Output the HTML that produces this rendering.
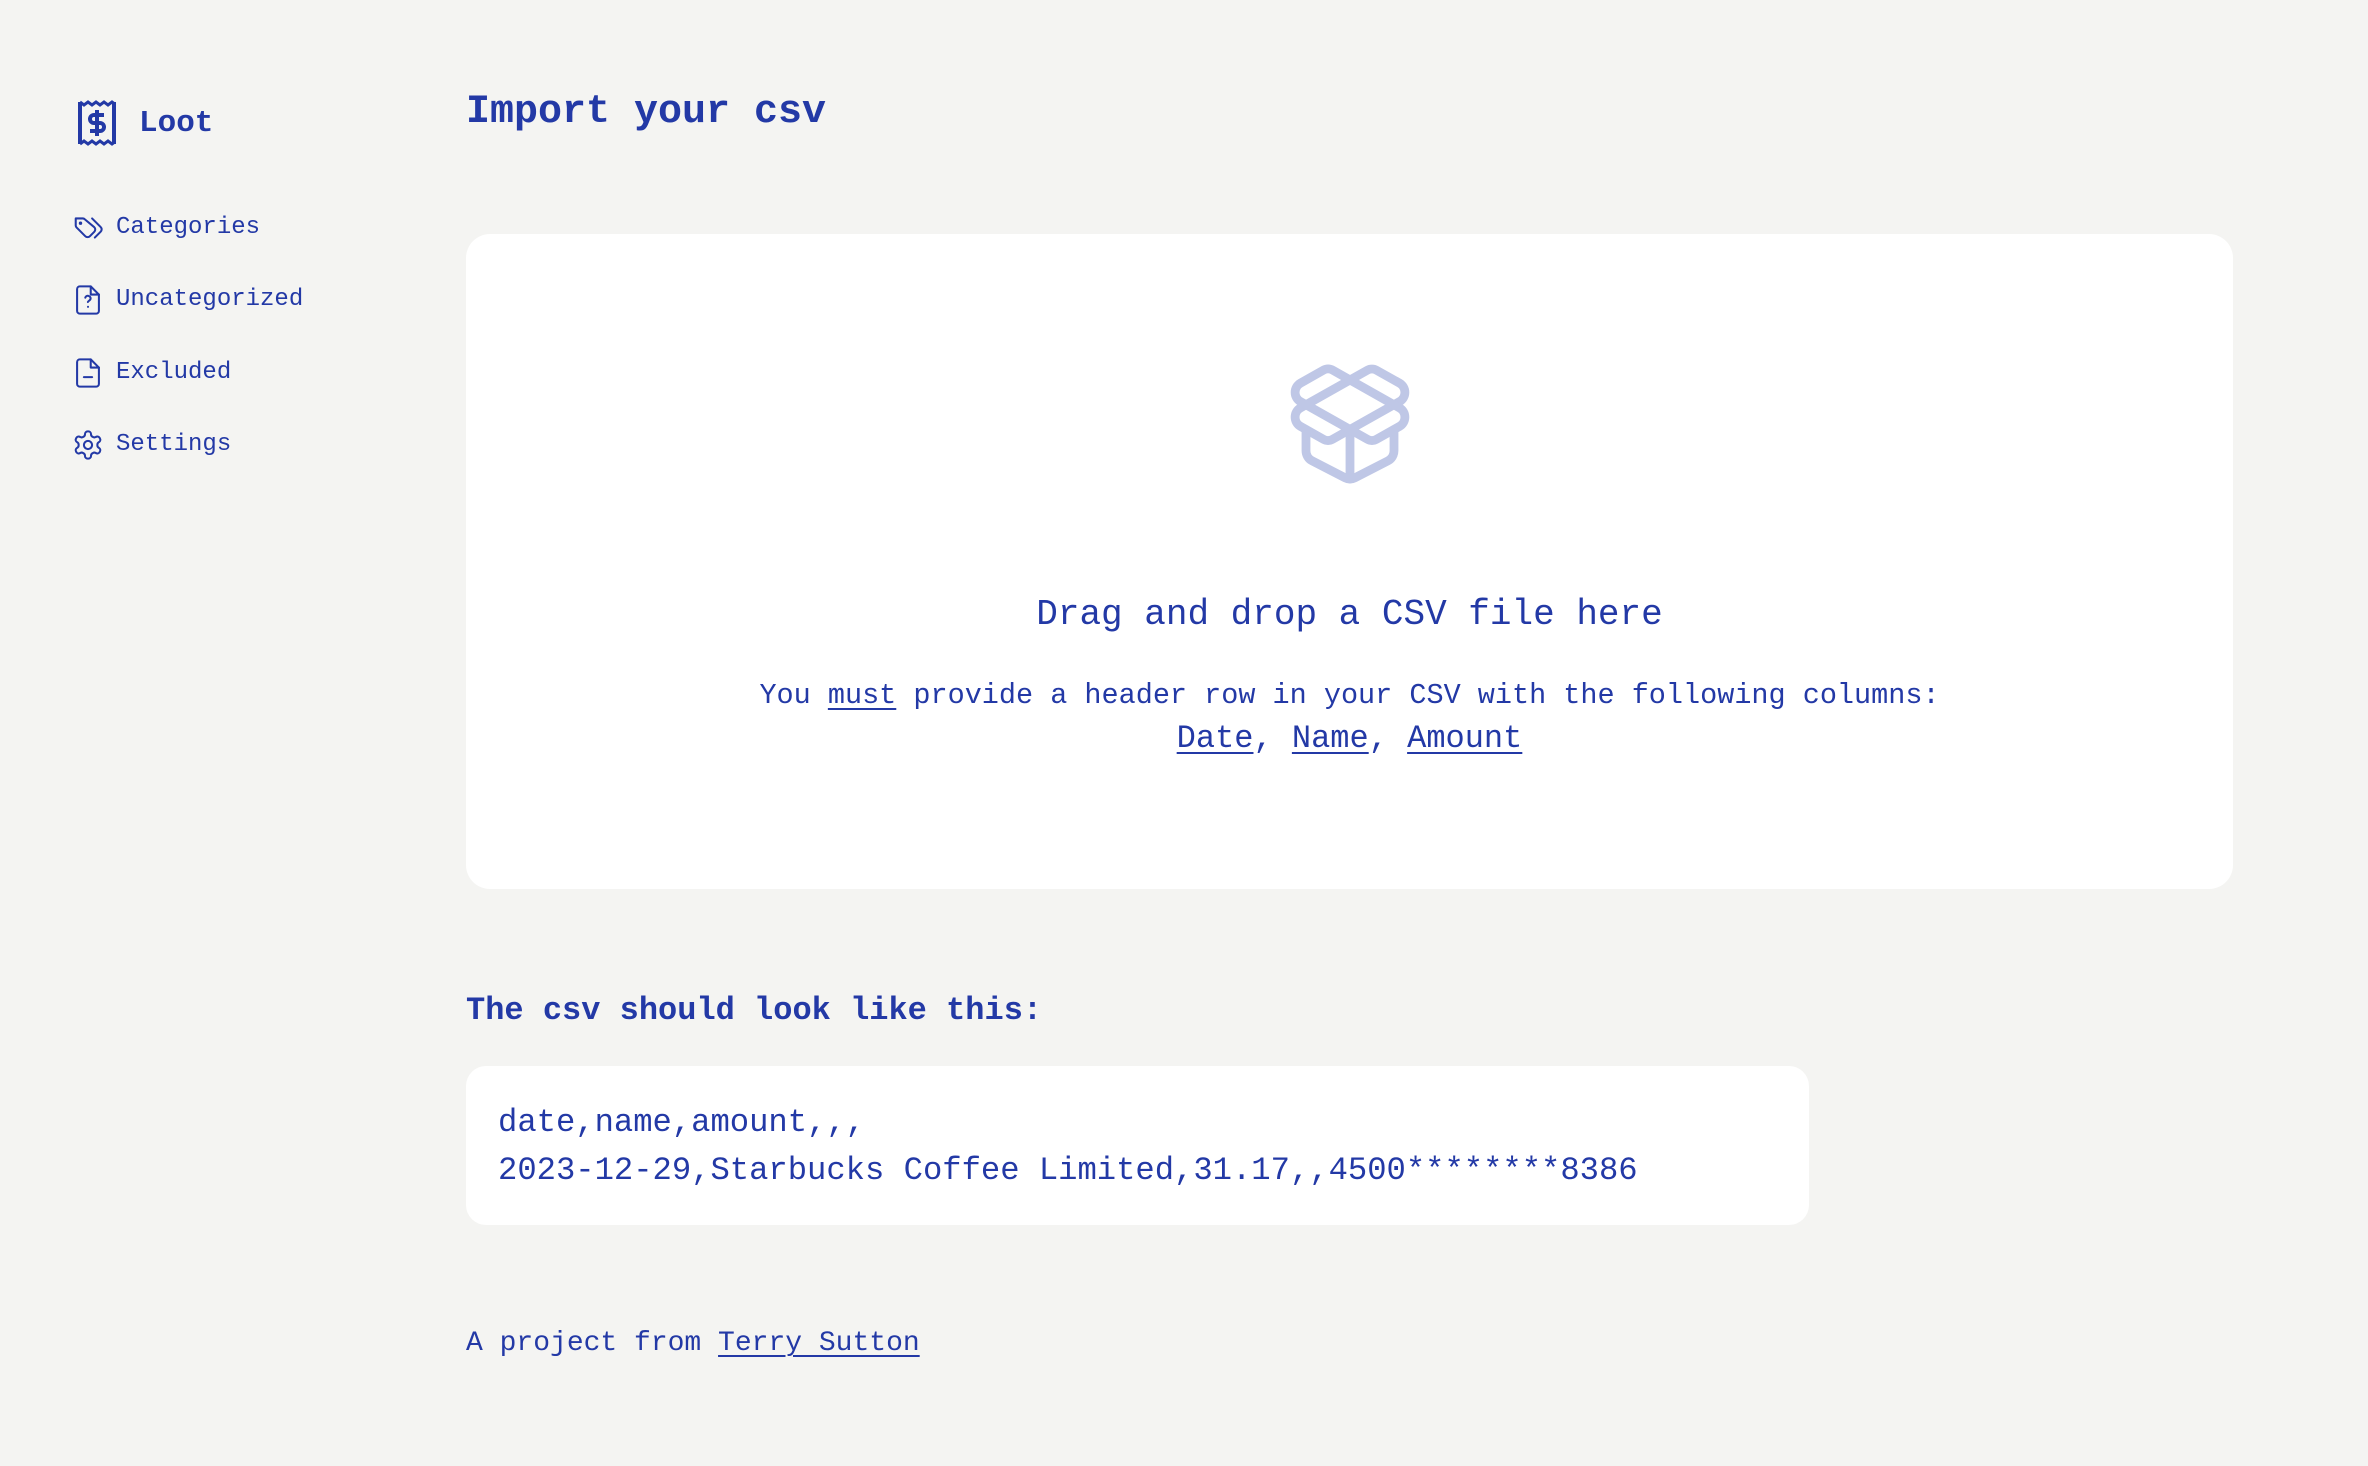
<!DOCTYPE html>
<html><head><meta charset="utf-8"><style>
*{margin:0;padding:0;box-sizing:border-box}
body{width:2368px;height:1466px;background:#f4f4f2;font-family:"Liberation Mono",monospace;color:#2339a6;position:relative;overflow:hidden}
.a{position:absolute;white-space:nowrap}
a{color:inherit;text-decoration:underline;text-underline-offset:5px;text-decoration-thickness:2px}
.nav{font-size:24px;line-height:30px}
.nav svg{position:absolute;left:-43px;top:0px}
</style></head><body>
<svg class="a" style="left:77px;top:99px" width="40" height="48" viewBox="0 0 40 48" fill="none" stroke="#2339a6" stroke-width="4">
<path d="M3 3 L3 45 M37 3 L37 45" />
<path d="M3 3 l4 3 l4-3 l4 3 l4-3 l4 3 l4-3 l4 3 l4-3 l2 1.5 M3 45 l4-3 l4 3 l4-3 l4 3 l4-3 l4 3 l4-3 l4 3 l2-1.5" stroke-width="3"/>
<path d="M27 16 h-10 a4 4 0 0 0 0 8 h6 a4 4 0 0 1 0 8 h-10 M20 11 v26"/>
</svg>
<div class="a" style="left:139px;top:104px;font-size:31px;font-weight:bold;line-height:40px">Loot</div>
<div class="a" style="left:466px;top:91px;font-size:40px;font-weight:bold;line-height:44px">Import your csv</div>

<div class="a nav" style="left:116px;top:213px">
<svg width="30" height="30" viewBox="1 1 22 22" fill="none" stroke="#2339a6" stroke-width="1.5" stroke-linecap="round" stroke-linejoin="round"><path d="m15 5 6.3 6.3a2.4 2.4 0 0 1 0 3.4L17 19"/><path d="M9.6 5.6A2 2 0 0 0 8.2 5H3v5.2a2 2 0 0 0 .6 1.4l6.4 6.4a2.4 2.4 0 0 0 3.4 0l3.2-3.2a2.4 2.4 0 0 0 0-3.4z"/><circle cx="6.5" cy="8.5" r=".5" fill="#2339a6"/></svg>Categories</div>
<div class="a nav" style="left:116px;top:285px">
<svg width="30" height="30" viewBox="1 1 22 22" fill="none" stroke="#2339a6" stroke-width="1.5" stroke-linecap="round" stroke-linejoin="round"><path d="M14 2H6a2 2 0 0 0-2 2v16a2 2 0 0 0 2 2h12a2 2 0 0 0 2-2V8z"/><path d="M14 2v6h6"/><path d="M10 10.3a2 2 0 0 1 3.9.7c0 1.3-2 1.7-2 2.5"/><path d="M12 17h.01"/></svg>Uncategorized</div>
<div class="a nav" style="left:116px;top:358px">
<svg width="30" height="30" viewBox="1 1 22 22" fill="none" stroke="#2339a6" stroke-width="1.5" stroke-linecap="round" stroke-linejoin="round"><path d="M14 2H6a2 2 0 0 0-2 2v16a2 2 0 0 0 2 2h12a2 2 0 0 0 2-2V8z"/><path d="M14 2v6h6"/><path d="M9 15h6"/></svg>Excluded</div>
<div class="a nav" style="left:116px;top:430px">
<svg width="30" height="30" viewBox="1 1 22 22" fill="none" stroke="#2339a6" stroke-width="1.5" stroke-linecap="round" stroke-linejoin="round"><path d="M12.22 2h-.44a2 2 0 0 0-2 2v.18a2 2 0 0 1-1 1.73l-.43.25a2 2 0 0 1-2 0l-.15-.08a2 2 0 0 0-2.730.73l-.22.38a2 2 0 0 0 .73 2.73l.15.1a2 2 0 0 1 1 1.72v.51a2 2 0 0 1-1 1.74l-.15.09a2 2 0 0 0-.73 2.73l.22.38a2 2 0 0 0 2.73.73l.15-.08a2 2 0 0 1 2 0l.43.25a2 2 0 0 1 1 1.73V20a2 2 0 0 0 2 2h.44a2 2 0 0 0 2-2v-.18a2 2 0 0 1 1-1.73l.43-.25a2 2 0 0 1 2 0l.15.08a2 2 0 0 0 2.73-.73l.22-.39a2 2 0 0 0-.73-2.73l-.15-.08a2 2 0 0 1-1-1.74v-.5a2 2 0 0 1 1-1.74l.15-.09a2 2 0 0 0 .73-2.73l-.22-.38a2 2 0 0 0-2.73-.73l-.15.08a2 2 0 0 1-2 0l-.43-.25a2 2 0 0 1-1-1.73V4a2 2 0 0 0-2-2z"/><circle cx="12" cy="12" r="3"/></svg>Settings</div>

<div class="a" style="left:466px;top:234px;width:1767px;height:655px;background:#fff;border-radius:24px"></div>
<svg class="a" style="left:1284px;top:358px" width="132" height="132" viewBox="0 0 24 24" fill="none" stroke="#bfc7e6" stroke-width="1.6" stroke-linecap="round" stroke-linejoin="round"><path d="M12 22v-9"/><path d="M15.17 2.21a1.67 1.67 0 0 1 1.630 0L21 4.57a1.93 1.93 0 0 1 0 3.36L8.82 14.79a1.655 1.655 0 0 1-1.64 0L3 12.43a1.93 1.93 0 0 1 0-3.36z"/><path d="M20 13v3.87a2.06 2.06 0 0 1-1.11 1.83l-6 3.08a1.93 1.93 0 0 1-1.78 0l-6-3.08A2.06 2.06 0 0 1 4 16.87V13"/><path d="M21 12.43a1.93 1.93 0 0 0 0-3.36L8.83 2.2a1.64 1.64 0 0 0-1.63 0L3 4.57a1.93 1.93 0 0 0 0 3.36l12.18 6.86a1.636 1.636 0 0 0 1.63 0z"/></svg>
<div class="a" style="left:466px;width:1767px;text-align:center;top:592px;font-size:36px;line-height:46px">Drag and drop a CSV file here</div>
<div class="a" style="left:466px;width:1767px;text-align:center;top:678px;font-size:28.5px;line-height:36px">You <a>must</a> provide a header row in your CSV with the following columns:</div>
<div class="a" style="left:466px;width:1767px;text-align:center;top:719px;font-size:32px;line-height:40px"><a>Date</a>, <a>Name</a>, <a>Amount</a></div>

<div class="a" style="left:466px;top:991px;font-size:32px;font-weight:bold;line-height:40px">The csv should look like this:</div>
<div class="a" style="left:466px;top:1066px;width:1343px;height:159px;background:#fff;border-radius:20px"></div>
<div class="a" style="left:498px;top:1099px;font-size:32.2px;line-height:48px">date,name,amount,,,<br>2023-12-29,Starbucks Coffee Limited,31.17,,4500********8386</div>

<div class="a" style="left:466px;top:1326px;font-size:28px;line-height:36px">A project from <a>Terry Sutton</a></div>
</body></html>
